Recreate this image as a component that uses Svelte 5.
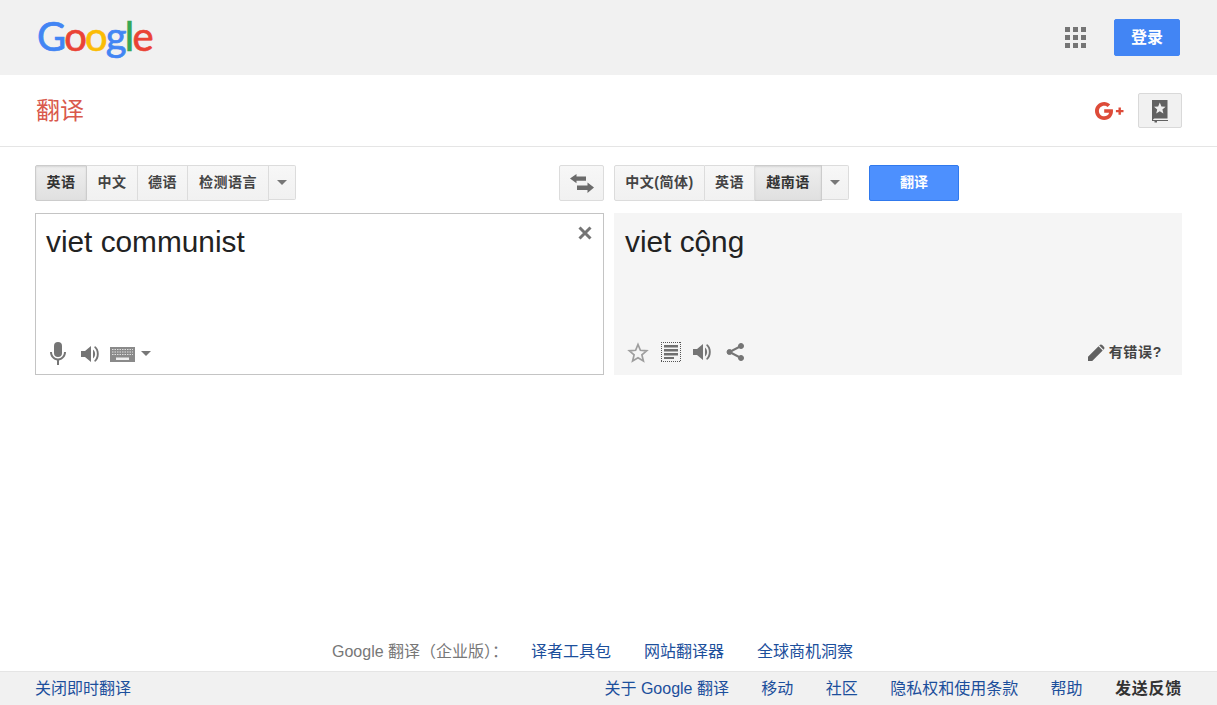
<script>
  const sourceLangs = [
    { label: "英语", width: 52, active: true },
    { label: "中文", width: 51 },
    { label: "德语", width: 50 },
    { label: "检测语言", width: 81 },
  ];
  const targetLangs = [
    { label: "中文(简体)", width: 91 },
    { label: "英语", width: 50 },
    { label: "越南语", width: 67, active: true },
  ];
  const logo = [
    ["G", "#4285f4"],
    ["o", "#ea4335"],
    ["o", "#fbbc05"],
    ["g", "#4285f4"],
    ["l", "#34a853"],
    ["e", "#ea4335"],
  ];
  const bizLinks = ["译者工具包", "网站翻译器", "全球商机洞察"];
  const footLinks = ["关于 Google 翻译", "移动", "社区", "隐私权和使用条款", "帮助"];
</script>

<div class="page">
  <header class="topbar">
    <div class="logo">
      {#each logo as [ch, color]}
        <span style="color: {color}">{ch}</span>
      {/each}
    </div>
    <div class="top-right">
      <svg class="apps" width="21" height="21" viewBox="0 0 21 21" fill="#757575">
        {#each [0, 8, 16] as y}
          {#each [0, 8, 16] as x}
            <rect {x} {y} width="5" height="5" />
          {/each}
        {/each}
      </svg>
      <button class="signin">登录</button>
    </div>
  </header>

  <div class="subbar">
    <div class="title">翻译</div>
    <div class="sub-right">
      <svg class="gplus" width="30" height="18" viewBox="0 0 30 18" fill="#dd4b39">
        <path d="M9.2 7.3v3.4h4.9c-.4 2.2-2.3 3.6-4.9 3.6-3 0-5.3-2.4-5.3-5.3s2.3-5.3 5.3-5.3c1.3 0 2.5.5 3.4 1.3l2.6-2.6C13.600.9 11.500 0 9.200 0 4.100 0 0 4 0 9s4.100 9 9.200 9c5.300 0 8.800-3.700 8.800-8.900 0-.6 0-1.200-.2-1.800H9.200z" />
        <path d="M23.500 5.500h2.400v2.500h2.600v2.300h-2.600v2.500h-2.400v-2.500h-2.600V8h2.600z" />
      </svg>
      <button class="book">
        <svg width="18" height="24" viewBox="0 0 18 24">
          <path fill="#616161" d="M1 1h15.500v18.500H3.500A1.500 1.500 0 0 0 2 21h15v1H6v1.500H3.500V22H1z" />
          <path fill="#eee" d="M8.800 3.500l1.600 3.900 4.200.3-3.200 2.700 1 4.100-3.600-2.200-3.600 2.200 1-4.100L3 7.700l4.200-.3z" />
        </svg>
      </button>
    </div>
  </div>

  <main class="main">
    <div class="toolbar">
      <div class="side left">
        <div class="langs">
          {#each sourceLangs as lang}
            <button class="lang" class:active={lang.active} style="width: {lang.width}px">{lang.label}</button>
          {/each}
          <button class="more"><i class="caret"></i></button>
        </div>
        <button class="swap">
          <svg width="24" height="19" viewBox="0 0 24 19" fill="#6b6b6b">
            <path d="M0 4.500L6.500 0v2.500H16v4.200H6.500v2.500z" />
            <path d="M24 13.500L17.500 19v-3H7v-4.500h10.500V8.500z" />
          </svg>
        </button>
      </div>
      <div class="side right">
        <div class="langs">
          {#each targetLangs as lang}
            <button class="lang" class:active={lang.active} style="width: {lang.width}px">{lang.label}</button>
          {/each}
          <button class="more"><i class="caret"></i></button>
        </div>
        <button class="translate">翻译</button>
      </div>
    </div>

    <div class="panes">
      <div class="pane source">
        <div class="text">viet communist</div>
        <svg class="clear" width="14" height="14" viewBox="0 0 14 14" stroke="#757575" stroke-width="3">
          <path d="M1.500 1.500l11 11M12.500 1.500l-11 11" />
        </svg>
        <div class="tools">
          <svg width="18" height="24" viewBox="0 0 18 24" fill="#757575">
            <rect x="5" y="0" width="8" height="15" rx="4" />
            <path d="M1 10h2c0 3.500 2.500 6.500 6 6.500s6-3 6-6.500h2c0 4.300-3 7.800-7 8.400V23H8v-4.600C4 17.800 1 14.300 1 10z" />
          </svg>
          <svg class="speaker" width="20" height="18" viewBox="0 0 20 18" fill="#757575">
            <path d="M0 6h4l6-5v16l-6-5H0z" />
            <path d="M12 4.500c2.800 2 2.800 7 0 9V4.500z" />
            <path d="M14 1c5 3 5 13 0 16l-.8-1.600c3.600-2.500 3.600-10.300 0-12.800z" />
          </svg>
          <svg class="keyboard" width="25" height="15" viewBox="0 0 25 15">
            <rect width="25" height="15" fill="#8a8a8a" />
            <path stroke="#ddd" stroke-width="1" stroke-dasharray="1.500 1" d="M2 2.500h21M2 5h21M2 7.500h21" />
            <path fill="#eee" d="M6 10.500h13V13H6z" />
          </svg>
          <i class="caret key-caret"></i>
        </div>
      </div>

      <div class="pane result">
        <div class="text">viet cộng</div>
        <div class="tools">
          <svg width="22" height="21" viewBox="0 0 22 21" fill="none" stroke="#9e9e9e" stroke-width="1.700">
            <path d="M11 2.500l2.400 5.800 6.300.5-4.800 4.100 1.500 6.100-5.400-3.300-5.400 3.300 1.500-6.100-4.800-4.100 6.300-.5z" />
          </svg>
          <svg class="phrase" width="20" height="20" viewBox="0 0 20 20">
            <path fill="none" stroke="#555" stroke-dasharray="1 1" d="M0 .5h20M0 19.500h20M.5 0v20M19.500 0v20" />
            <path fill="#707070" d="M3 3h14v2.500H3zM3 7h14v2.500H3zM3 11h14v2.500H3zM3 15h10v2H3z" />
          </svg>
          <svg class="speaker2" width="20" height="18" viewBox="0 0 20 18" fill="#757575">
            <path d="M0 6h4l6-5v16l-6-5H0z" />
            <path d="M12 4.500c2.800 2 2.800 7 0 9V4.500z" />
            <path d="M14 1c5 3 5 13 0 16l-.8-1.600c3.600-2.500 3.600-10.300 0-12.800z" />
          </svg>
          <svg class="share" width="19" height="18" viewBox="0 0 19 18" fill="#757575" stroke="#757575">
            <circle cx="15" cy="3" r="2.500" />
            <circle cx="3.500" cy="9" r="2.500" />
            <circle cx="15" cy="15" r="2.500" />
            <path fill="none" stroke-width="2" d="M15 3L3.500 9 15 15" />
          </svg>
          <div class="wrong">
            <svg width="17" height="17" viewBox="0 0 17 17" fill="#616161">
              <path d="M0 17v-4.200L10.500 2.300l4.200 4.200L4.200 17zM11.700 1.100c.7-.7 1.800-.7 2.500 0l1.700 1.700c.7.700.7 1.800 0 2.500l-.4.400-4.200-4.200z" />
            </svg>
            <span>有错误?</span>
          </div>
        </div>
      </div>
    </div>
  </main>

  <div class="biz">
    <span class="biz-label">Google 翻译（企业版）：</span>
    {#each bizLinks as link}
      <a href="#top">{link}</a>
    {/each}
  </div>

  <footer class="footer">
    <a href="#top">关闭即时翻译</a>
    <nav class="foot-nav">
      {#each footLinks as link}
        <a href="#top">{link}</a>
      {/each}
      <a class="feedback" href="#top">发送反馈</a>
    </nav>
  </footer>
</div>

<style>
  :global(body) {
    margin: 0;
    background: #fff;
  }

  .page {
    display: flex;
    flex-direction: column;
    height: 100vh;
    overflow: hidden;
    font-family: "Liberation Sans", "Noto Sans CJK SC", sans-serif;
    color: #222;
  }

  button {
    font-family: inherit;
    margin: 0;
    cursor: pointer;
  }

  a {
    color: #1c4f9c;
    text-decoration: none;
  }

  .topbar {
    flex: none;
    height: 75px;
    box-sizing: border-box;
    background: #f1f1f1;
    display: flex;
    align-items: center;
    justify-content: space-between;
    padding: 0 37px 0 37px;
  }

  .logo {
    font-family: Lato, sans-serif;
    font-weight: 400;
    font-size: 40px;
    line-height: 42px;
    letter-spacing: -1.800px;
    -webkit-text-stroke: 0.7px;
    margin-top: -3px;
  }

  .top-right {
    display: flex;
    align-items: center;
    gap: 28px;
  }

  .apps {
    display: block;
  }

  .signin {
    width: 66px;
    height: 37px;
    border: 1px solid #4285f4;
    border-radius: 2px;
    background: #4285f4;
    color: #fff;
    font-size: 16px;
    font-weight: 700;
    padding: 0 0 3px;
  }

  .subbar {
    flex: none;
    height: 72px;
    box-sizing: border-box;
    border-bottom: 1px solid #e5e5e5;
    display: flex;
    align-items: center;
    justify-content: space-between;
    padding: 0 35px 0 36px;
  }

  .title {
    font-size: 24px;
    color: #d9594c;
    line-height: 30px;
  }

  .sub-right {
    display: flex;
    align-items: center;
    gap: 13px;
  }

  .gplus {
    display: block;
  }

  .book {
    width: 44px;
    height: 35px;
    padding: 0;
    background: #f1f1f1;
    border: 1px solid #d9d9d9;
    border-radius: 2px;
    display: flex;
    align-items: center;
    justify-content: center;
  }

  .main {
    flex: 1;
    padding: 18px 35px 0;
  }

  .toolbar {
    display: flex;
    gap: 10px;
  }

  .side {
    display: flex;
    align-items: flex-start;
  }

  .side.left {
    width: 569px;
    justify-content: space-between;
  }

  .side.right {
    gap: 20px;
  }

  .langs {
    display: flex;
    align-items: flex-start;
  }

  .lang {
    height: 36px;
    padding: 0 0 4px;
    box-sizing: border-box;
    font-size: 14px;
    font-weight: 700;
    letter-spacing: 0.500px;
    color: #444;
    background: linear-gradient(#f7f7f7, #f1f1f1);
    border: 1px solid #dcdcdc;
    border-left-width: 0;
    white-space: nowrap;
  }

  .lang:first-child {
    border-left-width: 1px;
    border-radius: 2px 0 0 2px;
  }

  .lang.active {
    background: linear-gradient(#eeeeee, #e0e0e0);
    border-color: #ccc;
    color: #333;
    box-shadow: inset 0 1px 2px rgba(0, 0, 0, 0.1);
  }

  .more {
    width: 27px;
    height: 35px;
    padding: 0;
    background: linear-gradient(#f7f7f7, #f1f1f1);
    border: 1px solid #dcdcdc;
    border-left-width: 0;
    border-radius: 0 2px 2px 0;
    display: flex;
    align-items: center;
    justify-content: center;
  }

  .caret {
    display: block;
    width: 0;
    height: 0;
    border: 5px solid transparent;
    border-top-color: #777;
    border-bottom-width: 0;
  }

  .swap {
    width: 45px;
    height: 36px;
    padding: 0;
    background: linear-gradient(#f7f7f7, #f1f1f1);
    border: 1px solid #dcdcdc;
    border-radius: 2px;
    display: flex;
    align-items: center;
    justify-content: center;
  }

  .translate {
    width: 90px;
    height: 36px;
    padding: 0 0 4px;
    background: #4d90fe;
    border: 1px solid #3079ed;
    border-radius: 2px;
    color: #fff;
    font-size: 14px;
    font-weight: 700;
  }

  .panes {
    display: flex;
    gap: 10px;
    margin-top: 12px;
  }

  .pane {
    position: relative;
    height: 162px;
    box-sizing: border-box;
    display: flex;
    flex-direction: column;
    justify-content: space-between;
  }

  .source {
    width: 569px;
    border: 1px solid #c4c4c4;
    padding: 10px 10px 0;
  }

  .result {
    width: 568px;
    background: #f5f5f5;
    padding: 11px 11px 0;
  }

  .text {
    font-size: 29.800px;
    line-height: 36px;
    color: #222;
  }

  .clear {
    position: absolute;
    top: 12px;
    right: 11px;
  }

  .tools {
    display: flex;
    align-items: center;
    height: 24px;
    margin-bottom: 8px;
  }

  .source .tools {
    margin-left: 3px;
  }

  .speaker {
    margin-left: 14px;
  }

  .keyboard {
    margin-left: 9px;
  }

  .key-caret {
    margin-left: 6px;
    margin-top: -2px;
  }

  .result .tools {
    margin-bottom: 11px;
    margin-left: 2px;
  }

  .phrase {
    margin-left: 12px;
  }

  .speaker2 {
    margin-left: 12px;
  }

  .share {
    margin-left: 13px;
  }

  .wrong {
    margin-left: auto;
    margin-right: 9px;
    display: flex;
    align-items: center;
    gap: 4px;
    font-size: 14px;
    font-weight: 700;
    color: #444;
    letter-spacing: 0.700px;
  }

  .wrong span {
    margin-top: -3px;
  }

  .biz {
    flex: none;
    height: 40px;
    display: flex;
    align-items: center;
    font-size: 16px;
    padding: 0 0 2px 332px;
    box-sizing: border-box;
    gap: 33px;
  }

  .biz-label {
    color: #777;
    width: 166px;
    white-space: nowrap;
  }

  .footer {
    flex: none;
    height: 34px;
    box-sizing: border-box;
    background: #f1f1f1;
    border-top: 1px solid #e5e5e5;
    display: flex;
    align-items: center;
    justify-content: space-between;
    padding: 0 35px 3px;
    font-size: 16px;
  }

  .foot-nav {
    display: flex;
    gap: 32.400px;
  }

  .feedback {
    color: #333;
    font-weight: 700;
    letter-spacing: 0.750px;
  }
</style>
